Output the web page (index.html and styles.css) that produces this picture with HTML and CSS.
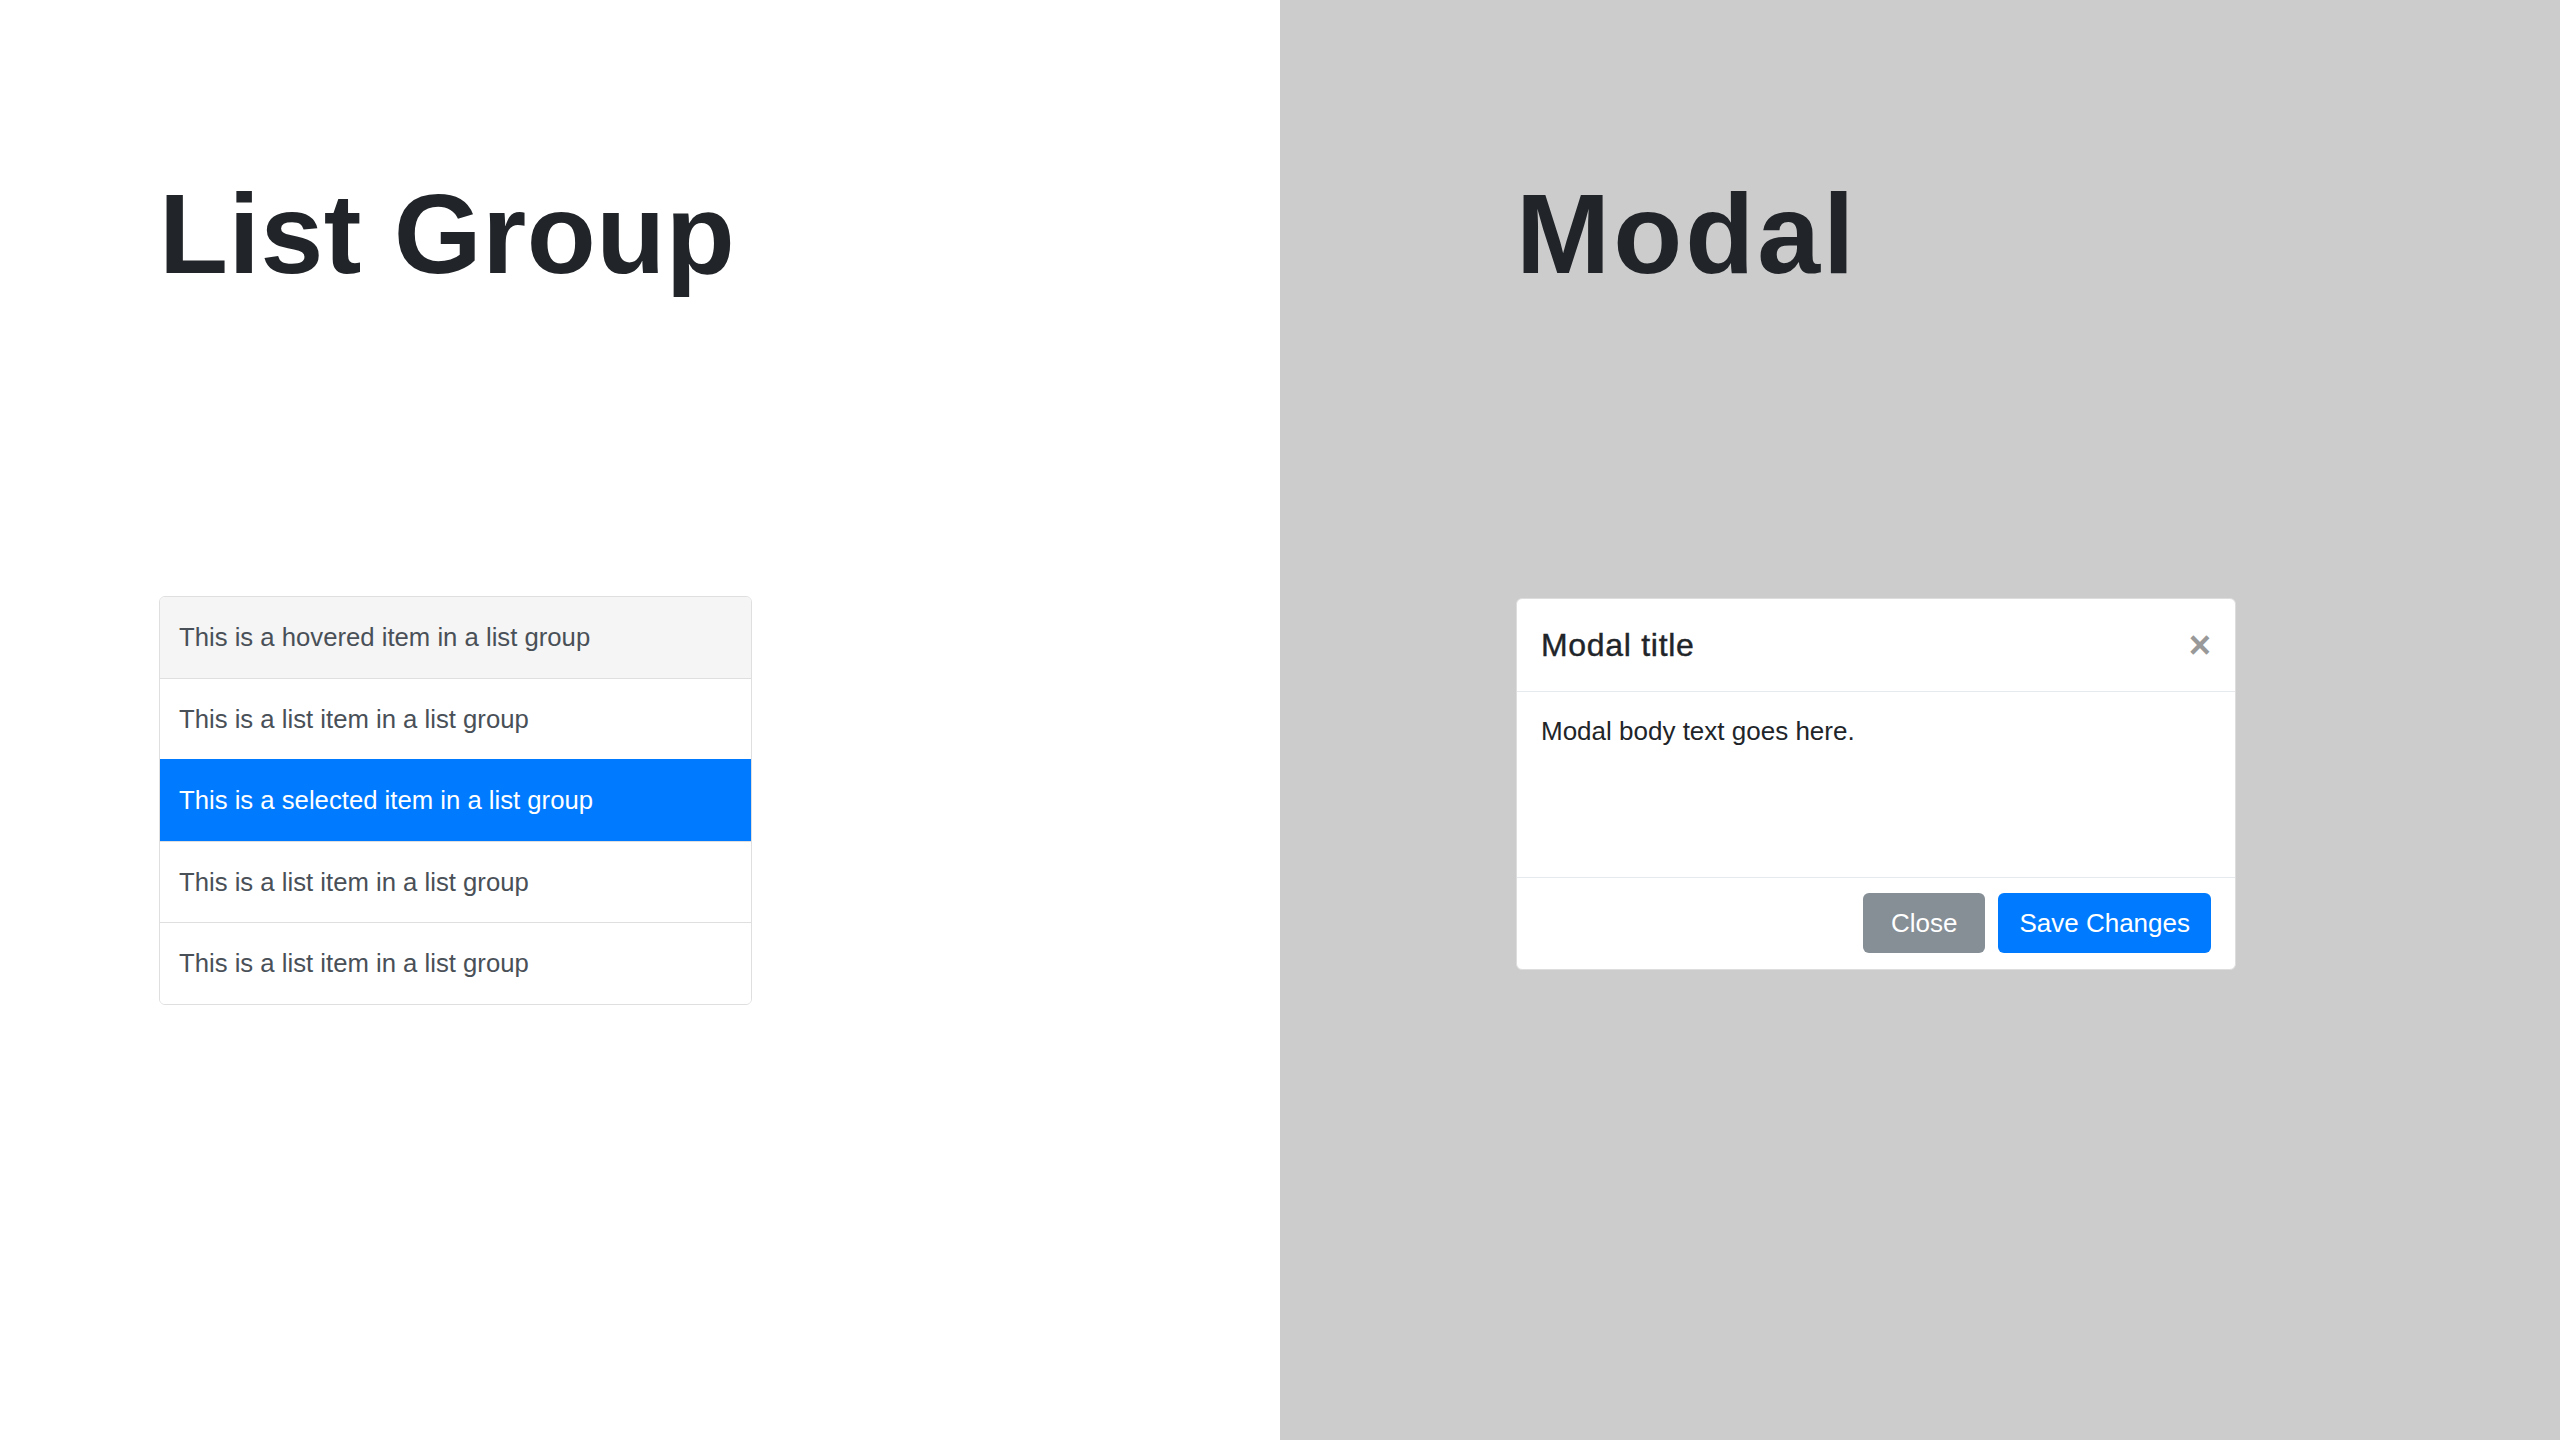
FILE: index.html
```html
<!DOCTYPE html>
<html lang="en">
<head>
    <meta charset="UTF-8">
    <meta name="viewport" content="width=device-width, initial-scale=1.0">
    <title>List Group / Modal</title>
    <link rel="stylesheet" href="styles.css">
</head>
<body>
    <div class="panel panel-light">
        <h1>List Group</h1>
        <ul class="list-group">
            <li class="list-item hovered">This is a hovered item in a list group</li>
            <li class="list-item">This is a list item in a list group</li>
            <li class="list-item active">This is a selected item in a list group</li>
            <li class="list-item">This is a list item in a list group</li>
            <li class="list-item">This is a list item in a list group</li>
        </ul>
    </div>

    <div class="panel panel-gray">
        <h1>Modal</h1>
        <div class="modal">
            <div class="modal-header">
                <h5 class="modal-title">Modal title</h5>
                <button class="close-btn">&times;</button>
            </div>
            <div class="modal-body">Modal body text goes here.</div>
            <div class="modal-footer">
                <button class="btn btn-secondary">Close</button>
                <button class="btn btn-primary">Save Changes</button>
            </div>
        </div>
    </div>
</body>
</html>
```

FILE: styles.css
```css
/* Dos paneles: list group a la izquierda, modal a la derecha */
body {
    font-family: "Liberation Sans", Arial, sans-serif;
    margin: 0;
    display: flex;
    height: 100vh;
    color: #212529;
}

.panel {
    width: 50%;
    box-sizing: border-box;
    padding-top: 166px;
}

.panel-light {
    background-color: #fff;
    padding-left: 159px;
}

.panel-gray {
    background-color: #ccc;
    padding-left: 236px;
}

h1 {
    margin: 0;
    font-size: 113px;
    line-height: 136px;
    font-weight: bold;
    letter-spacing: 0.5px;
    color: #212529;
}

.panel-gray h1 {
    letter-spacing: 3px;
}

/* List group */
.list-group {
    list-style: none;
    margin: 294px 0 0;
    padding: 0;
    width: 593px;
    box-sizing: border-box;
    border: 1px solid #dfdfdf;
    border-radius: 6px;
    overflow: hidden;
}

.list-item {
    padding: 20px 19px;
    font-size: 25.7px;
    line-height: 40.6px;
    color: #495057;
    background-color: #fff;
    border-top: 1px solid #dfdfdf;
}

.list-item:first-child {
    border-top: none;
}

.list-item.hovered {
    background-color: #f5f5f5;
}

.list-item.active {
    background-color: #007bff;
    border-top-color: #007bff;
    color: #fff;
}

/* Modal */
.modal {
    margin-top: 296px;
    width: 720px;
    box-sizing: border-box;
    background-color: #fff;
    border: 1px solid #ddd;
    border-radius: 6px;
}

.modal-header {
    display: flex;
    align-items: center;
    justify-content: space-between;
    padding: 24px;
    border-bottom: 1px solid #e6e9ed;
}

.modal-title {
    margin: 0;
    font-size: 32px;
    line-height: 44px;
    font-weight: normal;
    letter-spacing: 0.7px;
    -webkit-text-stroke: 0.4px #212529;
}

.close-btn {
    border: none;
    background: none;
    padding: 0;
    font-family: "Liberation Sans", Arial, sans-serif;
    font-size: 38px;
    line-height: 44px;
    font-weight: bold;
    color: #999;
    cursor: pointer;
}

.modal-body {
    height: 185px;
    box-sizing: border-box;
    padding: 20px 24px;
    font-size: 26px;
    line-height: 39px;
    color: #212529;
}

.modal-footer {
    display: flex;
    justify-content: flex-end;
    gap: 13px;
    padding: 15px 24px 16px;
    border-top: 1px solid #e6e9ed;
}

.btn {
    height: 60px;
    border: none;
    border-radius: 6px;
    font-family: "Liberation Sans", Arial, sans-serif;
    font-size: 26px;
    color: #fff;
    cursor: pointer;
}

.btn-secondary {
    background-color: #868e96;
    padding: 0 28px;
}

.btn-primary {
    background-color: #007bff;
    padding: 0 21px;
}
```
